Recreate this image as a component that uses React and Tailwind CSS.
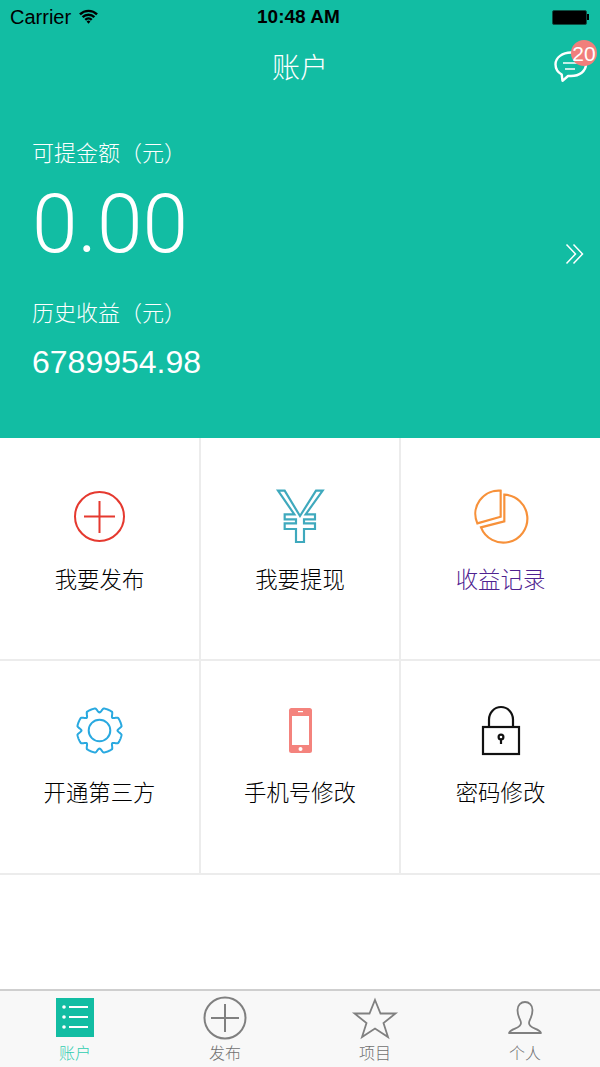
const FONT = "font-['Liberation_Sans','Noto_Sans_CJK_SC',sans-serif]";

function gearPath(cx, cy, rOut, depth) {
  const pts = [];
  for (let i = 0; i < 320; i++) {
    const t = (i / 320) * Math.PI * 2;
    const dip = Math.pow(Math.max(0, Math.cos(8 * t)), 1.5);
    const rad = rOut - depth * dip;
    pts.push(`${(cx + rad * Math.sin(t)).toFixed(2)} ${(cy - rad * Math.cos(t)).toFixed(2)}`);
  }
  return `M${pts.join('L')}Z`;
}

function PlusIcon() {
  return (
    <svg width="80" height="60" viewBox="0 0 80 60" fill="none" stroke="#e5392f" strokeWidth="2">
      <ellipse cx="39.5" cy="30.5" rx="24.5" ry="24.5" />
      <path d="M39.5 15v32M24 30.5h31" />
    </svg>
  );
}

function YenIcon() {
  return (
    <svg width="80" height="60" viewBox="0 0 240 180" fill="none" stroke="#3fa9bd" strokeWidth="6.500">
      <path d="M54 14h20l46 76 48-76h20l-51 71h28v15h-33v12h33v17h-33v39h-24v-39H74v-17h34v-12H74V85h29z" />
    </svg>
  );
}

function PieIcon() {
  return (
    <svg width="80" height="60" viewBox="0 0 240 180" fill="none" stroke="#f7913a" strokeWidth="6.500">
      <path d="M119 14v78l-70 20A70 70 0 0 1 119 14z" />
      <path d="M130 26v80l-70 18A72 72 0 1 0 130 26z" />
    </svg>
  );
}

function GearIcon() {
  return (
    <svg width="80" height="60" viewBox="0 0 80 60" fill="none" stroke="#29a9e0" strokeWidth="2">
      <path d={gearPath(39.5, 30.5, 22.500, 4.500)} />
      <circle cx="39.5" cy="30.5" r="10.8" />
    </svg>
  );
}

function PhoneIcon() {
  return (
    <svg width="80" height="60" viewBox="0 0 80 60">
      <rect x="29" y="8" width="23" height="45" rx="2.5" fill="#f4837d" />
      <rect x="32" y="16" width="17" height="29" fill="#fff" />
      <circle cx="40.5" cy="49" r="2" fill="#fff" />
      <rect x="38" y="11" width="5" height="1.2" fill="#fff" />
    </svg>
  );
}

function LockIcon() {
  return (
    <svg width="80" height="60" viewBox="0 0 80 60" fill="none" stroke="#111" strokeWidth="2.200">
      <rect x="22" y="27" width="36" height="27" />
      <path d="M28 27V19.500a12 12.500 0 0 1 24 0V27" />
      <circle cx="40" cy="37" r="2.400" />
      <path d="M40 39.500v4.500" />
    </svg>
  );
}

function ChatIcon() {
  return (
    <svg width="36" height="36" viewBox="0 0 36 36" fill="none" stroke="#fff" strokeWidth="2.400" strokeLinejoin="round">
      <path d="M18 3.500c8.500 0 15 5 15 11.800S26.500 27 18 27h-3l-5.500 4.800-.8-6.300C4.800 23.400 2.500 19.700 2.500 15.300 2.500 8.500 9.500 3.500 18 3.500z" />
      <path d="M10 14h14M12 20h10" strokeWidth="1.600" />
    </svg>
  );
}

function Wifi() {
  return (
    <svg className="-mt-[2px]" width="19" height="15" viewBox="0 0 20 15" fill="none" stroke="#000" strokeWidth="2.600">
      <path d="M1 5.200a13 13 0 0 1 18 0M3.800 8.200a9 9 0 0 1 12.400 0M6.600 11a5 5 0 0 1 6.800 0" />
      <path d="M10 15l-2-2.300a3 3 0 0 1 4 0z" fill="#000" stroke="none" />
    </svg>
  );
}

function Battery() {
  return (
    <div className="flex items-center">
      <div className="w-[35px] h-[15px] rounded-[2px] bg-black border border-[#0d4f43]" />
      <div className="w-[2px] h-[6px] bg-black" />
    </div>
  );
}

function TabList() {
  return (
    <svg width="60" height="44" viewBox="0 0 60 44">
      <rect x="11" y="2" width="38" height="39" fill="#12bda3" />
      <g fill="#fff">
        <circle cx="19" cy="11" r="1.800" />
        <circle cx="19" cy="21" r="1.800" />
        <circle cx="19" cy="31" r="1.800" />
        <rect x="24" y="10" width="19" height="2" />
        <rect x="24" y="20" width="19" height="2" />
        <rect x="24" y="30" width="19" height="2" />
      </g>
    </svg>
  );
}

function TabPlus() {
  return (
    <svg width="60" height="44" viewBox="0 0 60 44" fill="none" stroke="#808080" strokeWidth="2">
      <circle cx="30" cy="22" r="20.500" />
      <path d="M30 8v28M16 22h28" />
    </svg>
  );
}

function TabStar() {
  return (
    <svg width="60" height="44" viewBox="0 0 60 44" fill="none" stroke="#808080" strokeWidth="1.800" strokeLinejoin="miter">
      <path d="M30 4l5.500 13.500H50.500L38.500 27 43 41l-13-8.500L17 41l4.500-14L9.500 17.500H24.500z" />
    </svg>
  );
}

function TabUser() {
  return (
    <svg width="60" height="44" viewBox="0 0 60 44" fill="none" stroke="#808080" strokeWidth="1.800" strokeLinejoin="round">
      <path d="M14 37c2-5 12-4 12-10 0-3-3.500-6-3.500-13 0-5 3.500-8 7.500-8s7.500 3 7.500 8c0 7-3.500 10-3.500 13 0 6 10 5 12 10z" />
    </svg>
  );
}

const cells = [
  { label: '我要发布', Icon: PlusIcon, color: 'text-[#000]' },
  { label: '我要提现', Icon: YenIcon, color: 'text-[#000]' },
  { label: '收益记录', Icon: PieIcon, color: 'text-[#4f2290]' },
  { label: '开通第三方', Icon: GearIcon, color: 'text-[#000]' },
  { label: '手机号修改', Icon: PhoneIcon, color: 'text-[#000]' },
  { label: '密码修改', Icon: LockIcon, color: 'text-[#000]' },
];

const tabs = [
  { label: '账户', Icon: TabList, color: 'text-[#30cdb0]' },
  { label: '发布', Icon: TabPlus, color: 'text-[#707070]' },
  { label: '项目', Icon: TabStar, color: 'text-[#707070]' },
  { label: '个人', Icon: TabUser, color: 'text-[#707070]' },
];

export default function App() {
  return (
    <div className={`w-[600px] h-[1067px] bg-white flex flex-col overflow-hidden ${FONT}`}>
      <header className="h-[438px] shrink-0 bg-[#12bda3] text-white">
        <div className="h-[34px] pl-[10px] pr-[11px] flex items-center text-black">
          <div className="w-[247px] flex items-center gap-[8px] text-[20px]">
            <span>Carrier</span>
            <Wifi />
          </div>
          <span className="font-bold text-[19px]">10:48 AM</span>
          <div className="ml-auto"><Battery /></div>
        </div>
        <div className="relative h-[66px] flex items-center justify-center text-[28px] font-light">
          <span className="mt-[4px]">账户</span>
          <div className="absolute left-[553px] top-[15px]"><ChatIcon /></div>
          <span className="absolute left-[571px] top-[6px] w-[26px] h-[26px] rounded-full bg-[#f17f7c] flex items-center justify-center text-[21px] leading-none">20</span>
        </div>
        <div className="relative px-[32px] pt-[39px]">
          <div className="text-[22px] leading-[30px] font-light">可提金额（元）</div>
          <div className="mt-[10px] text-[82px] leading-[90px] font-light font-['Roboto',sans-serif]">0.00</div>
          <div className="mt-[30px] text-[22px] leading-[30px] font-light">历史收益（元）</div>
          <div className="mt-[13px] text-[32px] leading-[40px]">6789954.98</div>
          <svg className="absolute right-[15px] top-[143px]" width="20" height="22" viewBox="0 0 20 22" fill="none" stroke="#fff" strokeWidth="1.500">
            <path d="M1.500 1.500l9 9.500-9 9.500M8.500 1.500l9 9.500-9 9.500" />
          </svg>
        </div>
      </header>

      <div className="grid grid-cols-[201px_200px_199px] grid-rows-[223px_212px] border-b-2 border-[#ececec]">
        {cells.map(({ label, Icon, color }, i) => (
          <div
            key={label}
            className={`flex flex-col items-center ${i < 3 ? 'border-b-2 pt-[48px]' : 'pt-[39px]'} ${i % 3 < 2 ? 'border-r-2' : ''} border-[#ececec]`}
          >
            <Icon />
            <span className={`${i < 3 ? 'mt-[19px]' : 'mt-[18px]'} text-[22.4px] leading-[32px] font-light ${color}`}>{label}</span>
          </div>
        ))}
      </div>

      <div className="flex-1" />

      <nav className="h-[78px] shrink-0 bg-[#f8f8f8] border-t-2 border-[#cfcfcf] grid grid-cols-4">
        {tabs.map(({ label, Icon, color }) => (
          <div key={label} className="flex flex-col items-center pt-[5px]">
            <Icon />
            <span className={`mt-[3px] text-[16px] leading-[22px] font-light ${color}`}>{label}</span>
          </div>
        ))}
      </nav>
    </div>
  );
}
